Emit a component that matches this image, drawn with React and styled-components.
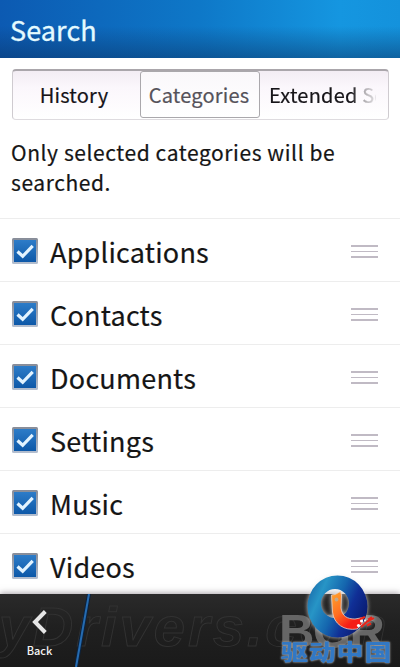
import React from 'react';
import styled, { createGlobalStyle } from 'styled-components';

const GlobalStyle = createGlobalStyle`
  * { box-sizing: border-box; }
  body {
    margin: 0;
    background: #fff;
    font-family: "Noto Sans CJK SC", "Noto Sans", sans-serif;
  }
`;

const categories = ['Applications', 'Contacts', 'Documents', 'Settings', 'Music', 'Videos'];

const Check = () => (
  <svg width="26" height="26" viewBox="0 0 26 26">
    <defs>
      <linearGradient id="checkFill" x1="0" y1="0" x2="0" y2="1">
        <stop offset="0" stopColor="#2d7cc8" />
        <stop offset="1" stopColor="#0d58a8" />
      </linearGradient>
      <linearGradient id="checkEdge" x1="0" y1="0" x2="0" y2="1">
        <stop offset="0" stopColor="#878c98" />
        <stop offset="1" stopColor="#b4bfd0" />
      </linearGradient>
    </defs>
    <rect x="0" y="0" width="26" height="26" rx="1.5" fill="url(#checkEdge)" />
    <rect x="2" y="2" width="22" height="22" fill="url(#checkFill)" />
    <path d="M5.5 13.5 L10.7 18.3 L20.7 7.8" fill="none" stroke="#e2f3ff" strokeWidth="3.2" />
  </svg>
);

const Logo = () => (
  <svg width="62" height="64" viewBox="0 0 62 64">
    <defs>
      <linearGradient id="ring" x1="0" y1="0.25" x2="1" y2="0.7">
        <stop offset="0" stopColor="#1a6dac" />
        <stop offset="0.2" stopColor="#2795c6" />
        <stop offset="0.48" stopColor="#1566ae" />
        <stop offset="0.7" stopColor="#102f96" />
        <stop offset="1" stopColor="#08186c" />
      </linearGradient>
      <linearGradient id="flame" x1="0" y1="0" x2="0.7" y2="1">
        <stop offset="0" stopColor="#ffa62d" />
        <stop offset="0.5" stopColor="#ff6d22" />
        <stop offset="0.85" stopColor="#f51d16" />
      </linearGradient>
    </defs>
    <path
      fillRule="evenodd"
      fill="url(#ring)"
      d="M30.5 0.5 A30 31 0 1 0 30.5 62.500 A30 31 0 1 0 30.5 0.5 Z M28 14 A14 14.500 0 1 1 28 43 A14 14.500 0 1 1 28 14 Z"
    />
    <path
      d="M24.500 20 L28 19.500 L33.500 16.500 L34.500 20 L34 33 C35 41 40 44 48 44 L56 42.500 L55 49 L50 54 C37 56 27 49 25.500 37 Z"
      fill="url(#flame)"
      stroke="#e9d3c8"
      strokeWidth="0.8"
    />
    <path d="M53 44 L58 42 M54 52 L62 45 M58 48 L67 43 M60 50.500 L64 48.500 M61 44.500 L65 42" stroke="#ec2518" strokeWidth="2" />
    <circle cx="29.500" cy="24.500" r="1.900" fill="#c3a98a" />
    <circle cx="51.500" cy="50.500" r="1.600" fill="#fff" />
    <circle cx="54.500" cy="46" r="1.500" fill="#fff" />
    <circle cx="58" cy="45.500" r="0.900" fill="#fff" />
  </svg>
);

const App = () => (
  <>
    <GlobalStyle />
    <Screen>
      <TitleBar>Search</TitleBar>
      <Segments>
        <Segment $width="127px">History</Segment>
        <Segment $width="120px" $active>Categories</Segment>
        <Segment $width="128px" $clipped><span>Extended Search</span></Segment>
      </Segments>
      <Hint>Only selected categories will be searched.</Hint>
      <List>
        {categories.map((name) => (
          <Row key={name}>
            <Check />
            <Label>{name}</Label>
            <Handle><i /><i /><i /></Handle>
          </Row>
        ))}
      </List>
      <ActionBar>
        <Outline>MyDrivers.com</Outline>
        <Back>
          <svg width="16" height="24" viewBox="0 0 16 24">
            <path d="M13.3 1.5 L3 12 L13.3 22.5" fill="none" stroke="#e6e6e6" strokeWidth="4" />
          </svg>
          Back
        </Back>
        <Slash width="18" height="73" viewBox="0 0 18 73">
          <path d="M14 0 L1 73" stroke="#0b2340" strokeWidth="4" />
          <path d="M14 0 L1 73" stroke="#256bb0" strokeWidth="2" />
        </Slash>
      </ActionBar>
      <Brand>
        <Initials>BGR</Initials>
        <LogoSpot><Logo /></LogoSpot>
        <BrandName>驱动中国</BrandName>
      </Brand>
    </Screen>
  </>
);

const Screen = styled.main`
  position: relative;
  display: flex;
  flex-direction: column;
  width: 400px;
  height: 667px;
  overflow: hidden;
  background: #fff;
  color: #151515;
`;

const TitleBar = styled.header`
  flex: none;
  height: 58px;
  padding: 0 10px;
  font-size: 27px;
  line-height: 59px;
  letter-spacing: 0.1px;
  color: #e4faff;
  -webkit-text-stroke: 0.3px #e4faff;
  background:
    linear-gradient(180deg, rgba(0, 40, 90, 0) 45%, rgba(10, 50, 100, 0.5) 100%),
    linear-gradient(90deg, #0c5ab2 0%, #0e78c8 50%, #1596e0 85%, #1492dc 100%);
`;

const Segments = styled.nav`
  flex: none;
  display: flex;
  width: 377px;
  height: 51px;
  margin: 11px 0 0 12px;
  border: 1px solid #cfcbd0;
  border-top: 2px solid #aaa6ab;
  border-bottom-color: #dedbdf;
  border-radius: 4px;
  background: linear-gradient(180deg, #f3edf4 0%, #fbf7fc 35%, #fff 100%);
`;

const Segment = styled.div`
  flex: none;
  width: ${(p) => p.$width};
  height: 47px;
  border: ${(p) => (p.$active ? '1px solid #aaa8ac' : '0')};
  border-radius: 3px;
  background: ${(p) => (p.$active ? 'linear-gradient(180deg, #faf8fb, #fff)' : 'none')};
  color: ${(p) => (p.$active ? '#55525a' : '#161418')};
  padding: ${(p) => (p.$clipped ? '0 12px 0 9px' : p.$active ? '0 2px 0 0' : '0 5px 0 0')};
  font-size: 20px;
  line-height: ${(p) => (p.$active ? '45px' : '47px')};
  letter-spacing: 0.2px;
  text-align: center;
  white-space: nowrap;
  -webkit-text-stroke: 0.2px;

  span {
    display: block;
    overflow: hidden;
    text-align: left;
    mask-image: linear-gradient(90deg, #000 78%, rgba(0, 0, 0, 0.4) 86%, rgba(0, 0, 0, 0.1) 100%);
  }
`;

const Hint = styled.p`
  flex: none;
  height: 98px;
  margin: 0;
  padding: 17px 40px 0 11px;
  font-size: 21px;
  line-height: 30px;
  letter-spacing: 0.58px;
  -webkit-text-stroke: 0.2px;
`;

const List = styled.section`
  flex: none;
  height: 376px;
  overflow: hidden;
`;

const Row = styled.div`
  display: flex;
  align-items: center;
  height: 63px;
  padding: 2px 22px 0 12px;
  border-top: 1px solid #ededed;
`;

const Label = styled.span`
  flex: 1;
  margin-left: 12px;
  padding-top: 2px;
  font-size: 27px;
  line-height: 58px;
  letter-spacing: 0.22px;
  -webkit-text-stroke: 0.2px;
`;

const Handle = styled.div`
  display: grid;
  gap: 4px;
  width: 27px;
  padding-top: 1px;

  i {
    height: 1.5px;
    background: #c0bac4;
  }
`;

const ActionBar = styled.footer`
  position: relative;
  flex: none;
  display: flex;
  height: 73px;
  background: linear-gradient(180deg, #2a2a2a 0%, #202020 45%, #1a1a1a 100%);
  box-shadow: 0 -1px 6px rgba(80, 70, 80, 0.5);
`;

const Outline = styled.span`
  position: absolute;
  left: -51px;
  top: 1px;
  font: italic bold 56px/64px "Liberation Sans", sans-serif;
  letter-spacing: 3px;
  color: transparent;
  -webkit-text-stroke: 1px #323232;
`;

const Back = styled.div`
  position: relative;
  display: flex;
  flex-direction: column;
  align-items: center;
  width: 75px;
  padding: 16px 0 0 4px;
  font-size: 11px;
  font-weight: 500;
  line-height: 16px;
  color: #f4f4f4;

  svg {
    margin-bottom: 8px;
  }
`;

const Slash = styled.svg`
  position: relative;
`;

const Brand = styled.div`
  position: absolute;
  left: 276px;
  top: 572px;
  width: 124px;
  height: 95px;
`;

const Initials = styled.span`
  position: absolute;
  left: 3px;
  top: 35px;
  font: bold 49px/49px "Liberation Sans", sans-serif;
  letter-spacing: -1.5px;
  color: #666;
`;

const LogoSpot = styled.div`
  position: absolute;
  left: 31px;
  top: 3px;
  filter: drop-shadow(0 0 2px rgba(235, 235, 235, 0.8));

  svg {
    display: block;
    overflow: visible;
  }
`;

const BrandName = styled.span`
  position: absolute;
  left: 5px;
  top: 65px;
  font-size: 27px;
  font-weight: 900;
  line-height: 27px;
  letter-spacing: 0.8px;
  white-space: nowrap;
  color: #3278c4;
  text-shadow: 0 0 2px #aaa, 0 0 3px #888;
  transform: scaleY(0.8);
`;

export default App;
